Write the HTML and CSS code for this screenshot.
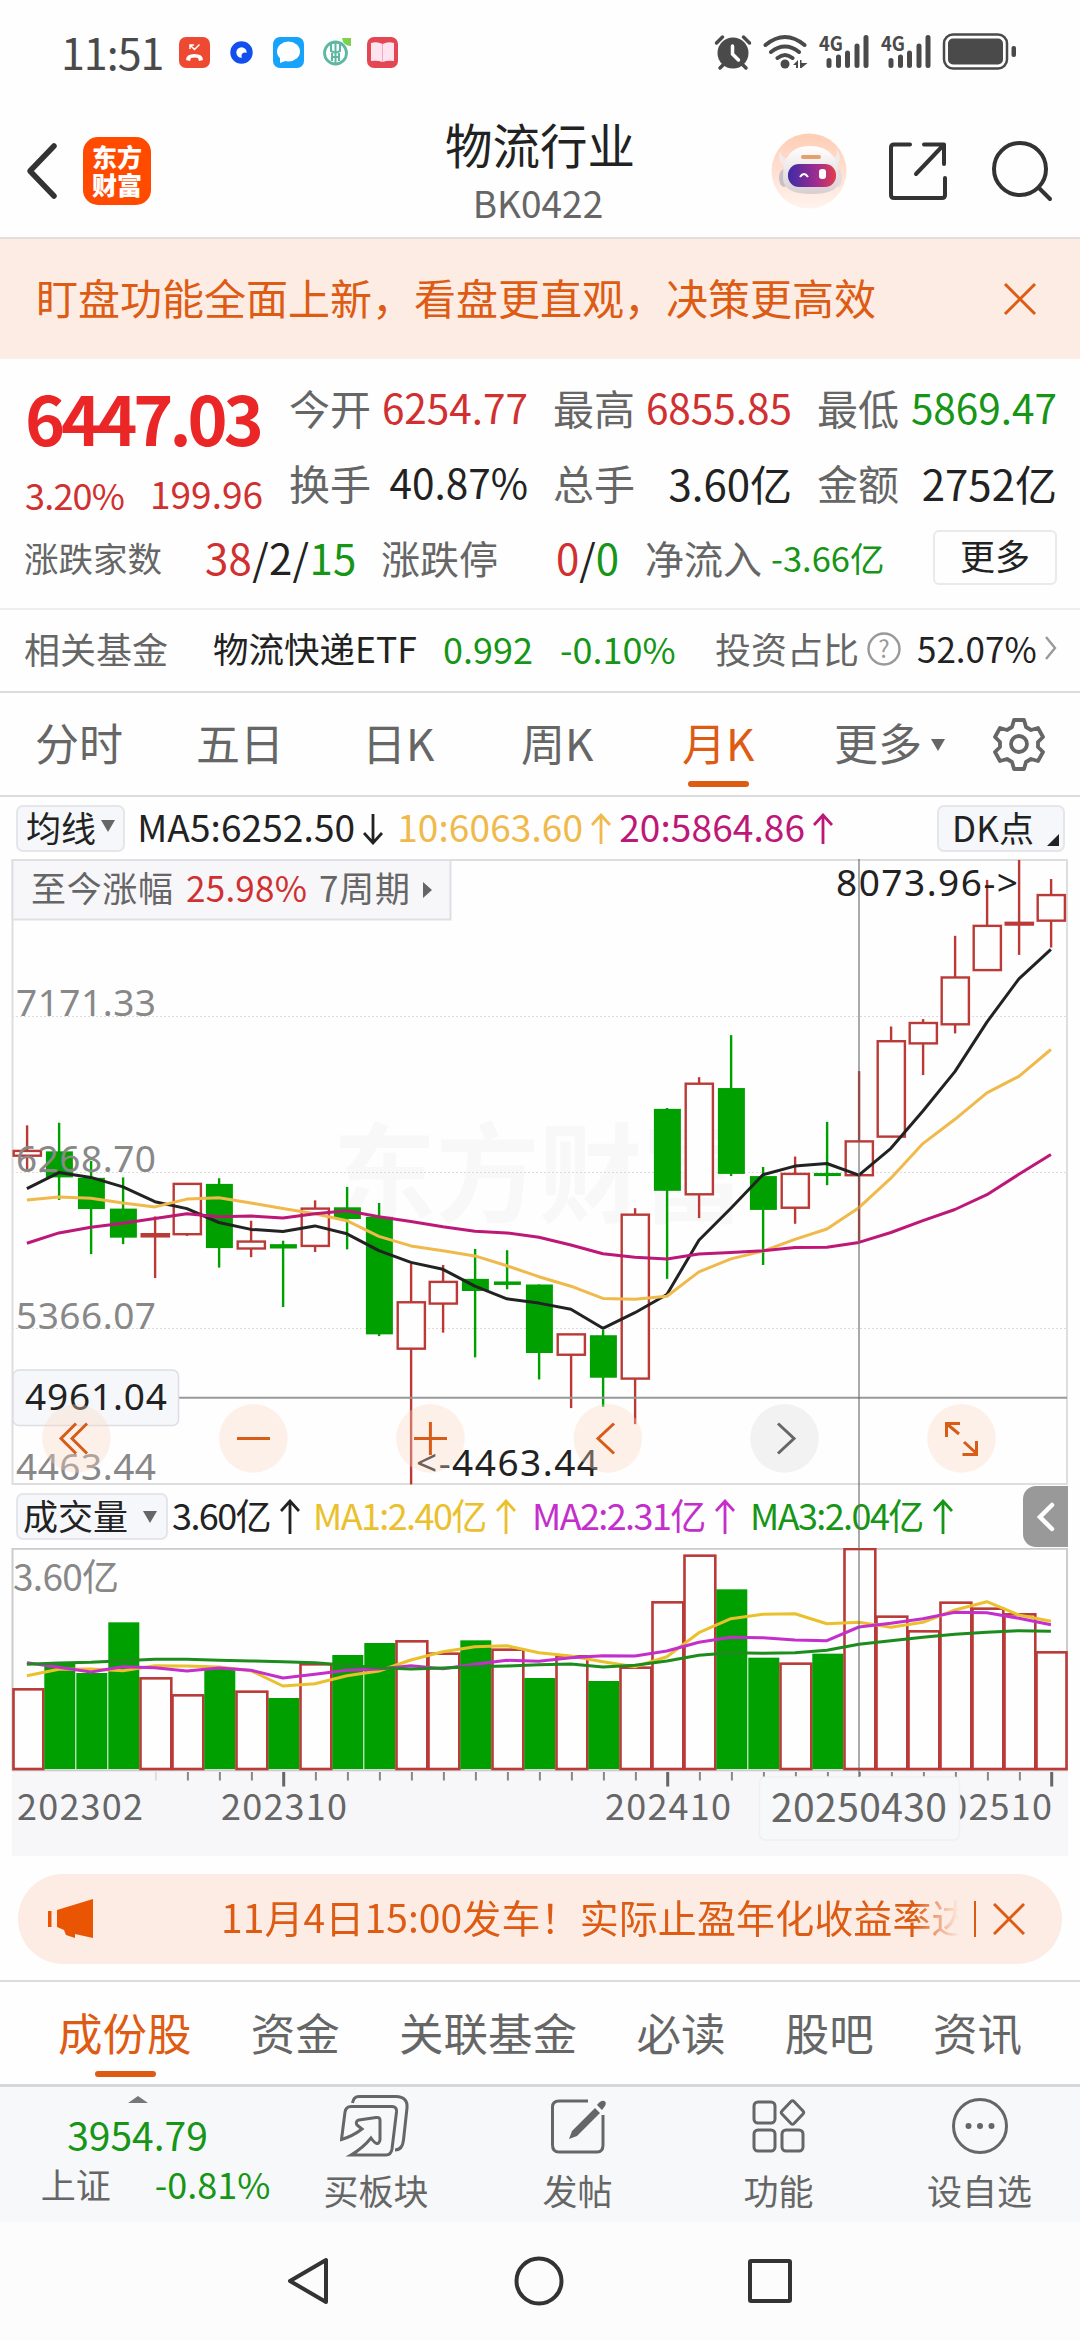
FILE: index.html
```html
<!DOCTYPE html>
<html lang="zh-CN">
<head>
    <meta charset="UTF-8">
    <meta name="viewport" content="width=device-width, initial-scale=1.0">
    <title>物流行业 BK0422</title>
    <link rel="stylesheet" href="styles.css">
</head>
<body>

    <!-- 状态栏 -->
    <div class="status">
        <span class="clock">11:51</span>
        <svg class="status-apps" width="222" height="36" viewBox="177 34 222 36">
            <rect x="179" y="37" width="31" height="31" rx="7" fill="#ee4a32"/>
            <path d="M186 60q0-6 8.500-6t8.500 6l-4 1-1-3q-3.500-1-7 0l-1 3z" fill="#fff"/>
            <path d="M190 49v-4h4M190.500 45.500l4 4 5-5" fill="none" stroke="#fff" stroke-width="1.500"/>
            <circle cx="241.500" cy="52.500" r="8.200" fill="#fff" stroke="#1250ee" stroke-width="6"/>
            <circle cx="245" cy="56" r="3.500" fill="#1250ee"/>
            <rect x="273" y="37" width="31" height="31" rx="7" fill="#17a2fb"/>
            <ellipse cx="288.500" cy="51.500" rx="11.500" ry="10" fill="#fff"/>
            <path d="M280 56v7l8-3z" fill="#fff"/>
            <circle cx="335.500" cy="53" r="11" fill="none" stroke="#5cb8a3" stroke-width="2.800"/>
            <path d="M335.500 41v23M331 43v8l4.500 2 4.500-2v-8M331 57h9M332 53v8M339 53v8" fill="none" stroke="#5cb8a3" stroke-width="2"/>
            <path d="M342 38h9v8q-8 0-9-8z" fill="#7ed14c"/>
            <rect x="367" y="37" width="31" height="31" rx="7" fill="#e24753"/>
            <path d="M371 43q6-2 11.500 1 5.500-3 11.500-1v18q-6-1-11.500 1-5.500-2-11.500-1z" fill="#ffe3ee"/>
            <path d="M382.500 44v18" stroke="#f3a9bd" stroke-width="1"/>
        </svg>
        <svg class="status-sys" width="304" height="40" viewBox="713 32 304 40" fill="#4a4a4a">
            <circle cx="732" cy="53" r="15.500"/>
            <path d="M715.500 43l6-6M748.500 43l-6-6M723 64l-4 4M741 64l4 4" stroke="#4a4a4a" stroke-width="3.500" stroke-linecap="round"/>
            <path d="M731.500 46v8l6 6" fill="none" stroke="#fff" stroke-width="3.500" stroke-linecap="round"/>
            <g fill="none" stroke="#4a4a4a" stroke-width="4" stroke-linecap="round">
                <path d="M764.500 45q19.500-16 39 0M770 52q14-11 28 0M776.500 58q7.500-6 15 0"/>
            </g>
            <circle cx="784" cy="64" r="4.500"/>
            <path d="M792 65l5-5v8h-2v-3zM799 60h1.500v3h6l-6 5h-1.500z"/>
            <text x="818" y="51" class="net" textLength="24" lengthAdjust="spacingAndGlyphs">4G</text>
            <g stroke="#4a4a4a" stroke-width="5" stroke-linecap="round">
                <path d="M828 60.500v5M837.500 57v8.500M846.500 53v12.500M856 46v19.500M865 37.500v28"/>
                <path d="M890 60.500v5M899.500 57v8.500M908.500 53v12.500M918 46v19.500M927 37.500v28"/>
            </g>
            <text x="880" y="51" class="net" textLength="24" lengthAdjust="spacingAndGlyphs">4G</text>
            <rect x="943" y="34.500" width="63" height="34" rx="9" fill="none" stroke="#4a4a4a" stroke-width="2.500"/>
            <rect x="947" y="38.500" width="55" height="26" rx="5"/>
            <rect x="1010.500" y="46" width="4.500" height="11" rx="2"/>
        </svg>
    </div>

    <!-- 标题栏 -->
    <div class="header">
        <svg width="34" height="60" viewBox="0 0 34 60"><path d="M30 5L6 30l24 25" fill="none" stroke="#333" stroke-width="5.500" stroke-linecap="round" stroke-linejoin="round"/></svg>
        <div class="logo">东方<br>财富</div>
        <div class="title">
            <h1>物流行业</h1>
            <p>BK0422</p>
        </div>
        <svg class="robot" width="76" height="76" viewBox="0 0 76 76">
            <defs>
                <linearGradient id="halo" x1="0" y1="0" x2="0" y2="1"><stop offset="0" stop-color="#ffcdb4"/><stop offset="1" stop-color="#fff3ee"/></linearGradient>
                <linearGradient id="visor" x1="0" y1="0" x2="1" y2="0"><stop offset="0" stop-color="#3d2ba6"/><stop offset="0.600" stop-color="#a02c8e"/><stop offset="1" stop-color="#e23e4e"/></linearGradient>
                <linearGradient id="helmet" x1="0" y1="0" x2="0" y2="1"><stop offset="0" stop-color="#fff"/><stop offset="1" stop-color="#d8ced2"/></linearGradient>
            </defs>
            <circle cx="38" cy="38" r="37.500" fill="url(#halo)"/>
            <path d="M9 18q2 8 9 8l6 5-6 6q-13-7-9-19zM66 16q1 8-6 10l-4 6 6 5q11-9 4-21z" fill="#f1e9ea"/>
            <ellipse cx="13" cy="45" rx="5" ry="9" fill="#c9c0c6"/>
            <ellipse cx="67" cy="45" rx="4" ry="9" fill="#e5dcde"/>
            <path d="M12 46q-1-33 27-33 29 0 29 34 0 14-28 14-27 0-28-15z" fill="url(#helmet)"/>
            <rect x="30" y="22" width="20" height="4" rx="2" fill="#e5a06d"/>
            <rect x="17" y="31" width="48" height="23" rx="11" fill="url(#visor)"/>
            <path d="M29 44q4-6 8 0" fill="none" stroke="#fff" stroke-width="2"/>
            <rect x="48" y="36" width="7" height="10" rx="3" fill="#fff"/>
        </svg>
        <svg class="share" width="60" height="60" viewBox="0 0 60 60" fill="none" stroke="#333" stroke-width="4" stroke-linecap="round" stroke-linejoin="round">
            <path d="M22 3.500H6q-3 0-3 3V54q0 3 3 3h48q3 0 3-3V37M36 3.500h20V23M56 3.500L28 33"/>
        </svg>
        <svg class="search" width="62" height="62" viewBox="0 0 62 62" fill="none" stroke="#333" stroke-width="4" stroke-linecap="round">
            <circle cx="29" cy="29" r="26"/>
            <path d="M48 48l11 11"/>
        </svg>
    </div>

    <!-- 功能提示 -->
    <div class="notice">
        <span>盯盘功能全面上新，看盘更直观，决策更高效</span>
        <svg width="34" height="34" viewBox="0 0 34 34"><path d="M2 2l30 30M32 2L2 32" stroke="#de5b14" stroke-width="3"/></svg>
    </div>

    <!-- 行情 -->
    <div class="quote">
        <div class="quote-main">
            <div class="price">
                <div class="now">6447.03</div>
                <div class="change"><span>3.20%</span><span class="diff">199.96</span></div>
            </div>
            <dl class="figures">
                <div><dt>今开</dt><dd class="up">6254.77</dd></div>
                <div><dt>最高</dt><dd class="up">6855.85</dd></div>
                <div><dt>最低</dt><dd class="down">5869.47</dd></div>
                <div><dt>换手</dt><dd>40.87%</dd></div>
                <div><dt>总手</dt><dd class="wide">3.60亿</dd></div>
                <div><dt>金额</dt><dd class="wide">2752亿</dd></div>
            </dl>
        </div>
        <div class="breadth">
            <span class="b-label">涨跌家数</span>
            <span class="b-count"><span class="up">38</span>/2/<span class="down">15</span></span>
            <span class="b-limit">涨跌停</span>
            <span class="b-zero"><span class="up">0</span>/<span class="down">0</span></span>
            <span class="b-flow">净流入</span>
            <span class="b-net down">-3.66亿</span>
            <span class="b-more">更多</span>
        </div>
    </div>

    <!-- 相关基金 -->
    <div class="fund">
        <span class="f-label">相关基金</span>
        <span class="f-name">物流快递ETF</span>
        <span class="f-price down">0.992</span>
        <span class="f-rate down">-0.10%</span>
        <span class="f-ratio">投资占比</span>
        <svg class="f-help" width="36" height="36" viewBox="0 0 36 36"><circle cx="18" cy="18" r="15.500" fill="none" stroke="#999" stroke-width="2.400"/><text x="18" y="27" class="help-mark">?</text></svg>
        <span class="f-value">52.07%</span>
        <svg width="12" height="26" viewBox="0 0 12 26"><path d="M1 2l9 11-9 11" fill="none" stroke="#999" stroke-width="2.400"/></svg>
    </div>

    <!-- 周期 -->
    <div class="periods">
        <span>分时</span>
        <span>五日</span>
        <span>日K</span>
        <span>周K</span>
        <span class="active">月K</span>
        <span class="p-more">更多<i class="caret"></i></span>
        <svg width="54" height="54" viewBox="0 0 54 54" fill="none" stroke="#666" stroke-width="3.800" stroke-linejoin="round">
            <path d="M22 3h10l2 7 5 3 7-2 5 9-5 5v5l5 5-5 9-7-2-5 3-2 7H22l-2-7-5-3-7 2-5-9 5-5v-5l-5-5 5-9 7 2 5-3z"/>
            <circle cx="27" cy="27" r="8"/>
        </svg>
    </div>

    <!-- 均线 -->
    <div class="ma">
        <span class="select">均线<i class="caret"></i></span>
        <span class="ma-item ma5">MA5:6252.50<svg width="20" height="32" viewBox="0 0 20 32"><path d="M10 1v29M1 20l9 10 9-10"/></svg></span>
        <span class="ma-item ma10">10:6063.60<svg width="20" height="32" viewBox="0 0 20 32"><path d="M10 31V2M1 12l9-10 9 10"/></svg></span>
        <span class="ma-item ma20">20:5864.86<svg width="20" height="32" viewBox="0 0 20 32"><path d="M10 31V2M1 12l9-10 9 10"/></svg></span>
        <span class="dk">DK点<i class="corner"></i></span>
    </div>

    <div class="charts">
        <!-- K线 -->
        <svg class="kline" width="1080" height="626" viewBox="0 859 1080 626">
            <text x="333" y="1214" class="watermark" textLength="412" lengthAdjust="spacingAndGlyphs">东方财富</text>
            <g class="grid">
                <path d="M12 1016.500h1056M12 1172.500h1056M12 1328.500h1056"/>
            </g>
            <rect x="12.500" y="860" width="1054.500" height="624" class="frame"/>
            <g id="candles"></g>
            <g class="axis">
                <text x="16" y="1015.500" textLength="140">7171.33</text>
                <text x="16" y="1172" textLength="140">6268.70</text>
                <text x="16" y="1328.500" textLength="140">5366.07</text>
                <text x="16" y="1480" textLength="140">4463.44</text>
            </g>
            <rect x="12.500" y="860" width="438" height="59.500" class="range-box"/>
            <g class="range">
                <text x="31" y="902" textLength="142">至今涨幅</text>
                <text x="186" y="902" textLength="121" class="range-up">25.98%</text>
                <text x="319" y="902" textLength="91">7周期</text>
                <path d="M423 882v16l9-8z"/>
            </g>
            <path d="M178 1397.700h889" class="cross"/>
            <rect x="13" y="1370" width="165.500" height="55.500" rx="6" class="tag"/>
            <text x="25" y="1410" textLength="142" class="mark">4961.04</text>
            <text x="416" y="1475.500" textLength="182" class="mark">&lt;-4463.44</text>
            <text x="836" y="895.500" textLength="182" class="mark">8073.96-&gt;</text>
            <g class="tools">
                <circle cx="76.400" cy="1438.400" r="34.300"/>
                <circle cx="253.400" cy="1438.400" r="34.300"/>
                <circle cx="430.400" cy="1438.400" r="34.300"/>
                <circle cx="607.800" cy="1438.400" r="34.300"/>
                <circle cx="784.500" cy="1438.400" r="34.300" class="off"/>
                <circle cx="961.500" cy="1438.400" r="34.300"/>
                <path d="M76 1423.500l-15 15 15 15M87 1423.500l-15 15 15 15"/>
                <path d="M237 1438.400h33M414 1438.400h33M430.400 1422v33"/>
                <path d="M614 1423.500l-16 15 16 15"/>
                <path d="M778 1423.500l16 15-16 15" class="off"/>
                <path d="M960 1423.500h-13.500v13.500M947 1424l12 10M964 1442l12 11M962.500 1454.500h14v-13.500"/>
            </g>
        </svg>

        <!-- 成交量 -->
        <div class="vol-head">
            <span class="select">成交量<i class="caret"></i></span>
            <span class="ma-item v0">3.60亿<svg width="20" height="36" viewBox="0 0 20 36"><path d="M10 35V2M1 12l9-10 9 10"/></svg></span>
            <span class="ma-item v1">MA1:2.40亿<svg width="20" height="36" viewBox="0 0 20 36"><path d="M10 35V2M1 12l9-10 9 10"/></svg></span>
            <span class="ma-item v2">MA2:2.31亿<svg width="20" height="36" viewBox="0 0 20 36"><path d="M10 35V2M1 12l9-10 9 10"/></svg></span>
            <span class="ma-item v3">MA3:2.04亿<svg width="20" height="36" viewBox="0 0 20 36"><path d="M10 35V2M1 12l9-10 9 10"/></svg></span>
            <span class="drawer"><svg width="18" height="30" viewBox="0 0 18 30"><path d="M15 3L3 15l12 12" fill="none" stroke="#fff" stroke-width="4.500" stroke-linecap="round"/></svg></span>
        </div>
        <svg class="volume" width="1080" height="308" viewBox="0 1548 1080 308">
            <rect x="12" y="1771" width="1056" height="85" fill="#f7f7fa"/>
            <rect x="12.500" y="1548.800" width="1054.500" height="221.500" class="vol-frame"/>
            <text x="13" y="1591" textLength="106" class="vol-max">3.60亿</text>
            <g id="bars"></g>
            <g id="ticks"></g>
            <g class="dates">
                <text x="17" y="1820" textLength="126">202302</text>
                <text x="221" y="1820" textLength="126">202310</text>
                <text x="605" y="1820" textLength="126">202410</text>
                <text x="926" y="1820" textLength="126">202510</text>
                <rect x="759.500" y="1777" width="200" height="63" rx="6" class="date-box"/>
                <text x="771" y="1821.500" textLength="176" class="picked">20250430</text>
            </g>
        </svg>
        <div class="cross-v"></div>
    </div>

    <!-- 活动 -->
    <div class="promo-wrap">
        <div class="promo">
            <svg width="46" height="40" viewBox="0 0 46 40" fill="#ea5504"><path d="M0 12h3.500v16H0zM9 11L45 0v39l-18-4v4l-9-3-2-5-7-3z"/></svg>
            <span class="promo-text">11月4日15:00发车！实际止盈年化收益率达</span>
            <i class="promo-line"></i>
            <svg width="32" height="32" viewBox="0 0 32 32"><path d="M1 1l30 30M31 1L1 31" stroke="#de5b14" stroke-width="3"/></svg>
        </div>
    </div>

    <!-- 栏目 -->
    <div class="sections">
        <span class="active">成份股</span>
        <span>资金</span>
        <span>关联基金</span>
        <span>必读</span>
        <span>股吧</span>
        <span>资讯</span>
    </div>

    <!-- 底部工具栏 -->
    <div class="toolbar">
        <div class="index">
            <i class="rise"></i>
            <strong>3954.79</strong>
            <p><span>上证</span><em>-0.81%</em></p>
        </div>
        <div class="tool">
            <svg width="72" height="64" viewBox="0 0 72 64">
                <path d="M12.500 9Q13.500 2.500 19 2.500H56Q68 3 67 14L63.500 46Q62.500 56 55 56"/>
                <path d="M1.500 45.500L5 18Q6 12.500 11 12.500H52Q57 12.500 56.500 18L52 55Q51 61 46 61H11Q23 54 31 44Q38 54 40 46V26Q40 23 36 23.500L19 26Q15 27 17 31L22 35Q13 42 1.500 45.500Z"/>
            </svg>
            <span>买板块</span>
        </div>
        <div class="tool">
            <svg width="56" height="56" viewBox="0 0 56 56">
                <path d="M38 3H9Q2.500 3 2.500 9V47Q2.500 54 9 54H47Q53 54 53 47V17"/>
                <path d="M45 10l5 5-23 23-8 3 3-8zM47 7q4-5 7-4t1 5l-3 4z" class="solid"/>
            </svg>
            <span>发帖</span>
        </div>
        <div class="tool">
            <svg width="56" height="56" viewBox="0 0 56 56">
                <rect x="3" y="4" width="21" height="21" rx="4"/>
                <rect x="3" y="32" width="21" height="21" rx="4"/>
                <rect x="31" y="32" width="21" height="21" rx="4"/>
                <path d="M40 3.500q1.500-1.500 3 0l9 9.500q1.500 1.500 0 3l-9 9.500q-1.500 1.500-3 0l-9-9.500q-1.500-1.500 0-3z"/>
            </svg>
            <span>功能</span>
        </div>
        <div class="tool">
            <svg width="58" height="58" viewBox="0 0 58 58">
                <circle cx="29" cy="29" r="26.500"/>
                <path d="M17.500 29h.01M29 29h.01M40.500 29h.01" class="dots"/>
            </svg>
            <span>设自选</span>
        </div>
    </div>

    <!-- 系统导航 -->
    <div class="nav">
        <svg width="44" height="50" viewBox="0 0 44 50"><path d="M40 4v42L4 25z"/></svg>
        <svg width="50" height="50" viewBox="0 0 50 50"><circle cx="25" cy="25" r="22.500"/></svg>
        <svg width="46" height="46" viewBox="0 0 46 46"><rect x="3" y="3" width="40" height="40" rx="1"/></svg>
    </div>

    <script src="chart.js"></script>
</body>
</html>
```
FILE: styles.css
```css
* {
    box-sizing: border-box;
    margin: 0;
    padding: 0;
}

body {
    width: 1080px;
    font-family: "Noto Sans CJK SC", "Noto Sans", sans-serif;
    background: #fefefe;
    color: #222;
    line-height: 1;
    white-space: nowrap;
}

svg {
    display: block;
    flex: none;
}

i, em {
    font-style: normal;
}

.up { color: #d03030; }
.down { color: #169516; }

.caret {
    display: inline-block;
    border: 7.5px solid transparent;
    border-top: 12px solid #666;
    border-bottom: 0;
}

/* 状态栏 */
.status {
    height: 100px;
    padding: 4px 62px 0 61px;
    display: flex;
    align-items: center;
}

.clock {
    width: 116px;
    padding-bottom: 2px;
    font-size: 43px;
    letter-spacing: -1px;
    color: #4a4a4a;
}

.status-sys {
    margin-left: auto;
}

.net {
    font-size: 20px;
    font-weight: bold;
}

/* 标题栏 */
.header {
    height: 139px;
    padding: 4px 27px 0 24px;
    display: flex;
    align-items: center;
    border-bottom: 2px solid #e3dedc;
}

.logo {
    width: 68px;
    height: 68px;
    margin-left: 25px;
    padding-top: 5px;
    border-radius: 15px;
    background: #ff4a00;
    color: #fff;
    font-size: 25px;
    font-weight: 900;
    line-height: 28px;
    text-align: center;
}

.title {
    width: 240px;
    margin-left: 269px;
    text-align: center;
}

.title h1 {
    font-size: 47.5px;
    font-weight: normal;
    line-height: 58px;
}

.title p {
    padding-top: 4px;
    font-size: 37px;
    line-height: 50px;
    color: #666;
    text-indent: -4px;
}

.robot { margin-left: 111px; }
.share { margin-left: 41px; }
.search { margin-left: 43px; }

/* 功能提示 */
.notice {
    height: 120px;
    padding: 0 43px 0 36px;
    display: flex;
    align-items: center;
    justify-content: space-between;
    background: #fcece3;
    color: #de5b14;
    font-size: 42px;
}

.notice span {
    padding-bottom: 5px;
}

/* 行情 */
.quote {
    height: 251px;
    border-bottom: 2px solid #eeeeee;
}

.quote-main {
    display: flex;
    height: 160px;
    padding-left: 25px;
}

.price {
    width: 264px;
    padding-top: 21px;
}

.now {
    font-size: 68px;
    line-height: 74px;
    font-weight: bold;
    letter-spacing: -4px;
    color: #ea2626;
}

.change {
    display: flex;
    justify-content: space-between;
    align-items: center;
    width: 238px;
    margin-top: 21px;
    font-size: 36px;
    letter-spacing: -0.8px;
    color: #d03030;
}

.change .diff {
    font-size: 37px;
    letter-spacing: 0;
}

.figures {
    display: grid;
    grid-template-columns: 239px 239px 240px;
    column-gap: 25px;
    grid-auto-rows: 75px;
    padding-top: 11px;
}

.figures div {
    display: flex;
    align-items: center;
    justify-content: space-between;
    font-size: 41px;
}

.figures dt {
    color: #666;
}

.figures dd {
    font-size: 40.5px;
}

.figures .wide {
    font-size: 42px;
}

.breadth {
    display: flex;
    align-items: center;
    height: 76px;
    padding-left: 24px;
    color: #666;
    font-size: 39px;
}

.b-label { font-size: 34.5px; width: 181px; }
.b-count { font-size: 42px; width: 176px; color: #222; letter-spacing: 0.3px; }
.b-limit { width: 175px; }
.b-zero { font-size: 42px; width: 89px; color: #222; }
.b-flow { width: 126px; }
.b-net { font-size: 34.5px; width: 162px; }

.b-more {
    width: 124px;
    height: 55px;
    border: 2px solid #eaeaea;
    border-radius: 6px;
    color: #222;
    font-size: 35px;
    line-height: 46px;
    text-align: center;
}

/* 相关基金 */
.fund {
    height: 83px;
    padding: 0 22px 6px 24px;
    display: flex;
    align-items: center;
    border-bottom: 2px solid #dcdcdc;
    font-size: 36px;
    color: #666;
}

.f-label { width: 189px; }
.f-name { width: 230px; color: #222; font-size: 35.5px; }
.f-price { width: 117px; }
.f-rate { width: 155px; }
.f-ratio { width: 151px; }
.f-help { margin: 2px 15px 0 0; }
.f-value { width: 128px; color: #222; font-size: 35px; }

.help-mark {
    font-size: 24px;
    fill: #999;
    text-anchor: middle;
}

/* 周期 */
.periods {
    height: 104px;
    padding: 0 34px 0 35px;
    display: flex;
    align-items: center;
    border-bottom: 2px solid #dcdcdc;
    font-size: 44px;
    color: #666;
}

.periods span {
    position: relative;
    flex: none;
    height: 100%;
    width: 161px;
    line-height: 98px;
}

.periods span:nth-child(2) { width: 166px; }
.periods .active { width: 152px; }
.periods span:nth-child(3) { width: 159px; }
.periods .p-more { width: 158px; }
.periods .p-more .caret { margin: 0 0 10px 9px; }

.active {
    color: #de5b14;
}

/* 选中项下划线 */
.active::after {
    content: "";
    position: absolute;
    left: 6px;
    bottom: 8px;
    width: 61px;
    height: 6px;
    border-radius: 3px;
    background: #de5b14;
}

/* 均线 */
.ma, .vol-head {
    display: flex;
    align-items: center;
    padding: 0 16px;
}

.ma {
    height: 62px;
    padding-right: 15px;
    font-size: 37px;
    letter-spacing: 0.1px;
}

.select, .dk {
    display: flex;
    align-items: center;
    height: 47px;
    padding: 0 8px 4px;
    border: 2px solid #e4e6ea;
    border-radius: 7px;
    background: #f6f7fa;
    font-size: 35px;
}

.ma .select .caret { margin-left: 5px; }

.dk {
    position: relative;
    width: 128px;
    margin-left: auto;
    padding-left: 13px;
}

.corner {
    position: absolute;
    right: 4px;
    bottom: 4px;
    border: 6px solid #222;
    border-top-color: transparent;
    border-left-color: transparent;
}

.ma-item {
    display: flex;
    align-items: center;
    padding-bottom: 4px;
}

.ma-item svg {
    margin: 5px 0 0 8px;
    fill: none;
    stroke: currentColor;
    stroke-width: 2.8;
}

.ma5 { width: 260px; margin-left: 12px; }
.ma10 { width: 222px; color: #f0b94c; }
.ma20 { color: #bd1878; }

/* K线 */
.charts {
    position: relative;
}

.frame, .vol-frame {
    fill: none;
    stroke: #dedede;
    stroke-width: 2;
}

.vol-frame {
    stroke: #cccccc;
}

.grid {
    stroke: #dcdcdc;
    stroke-width: 1;
    stroke-dasharray: 2 2;
}

.watermark {
    font-size: 108px;
    font-weight: bold;
    fill: #f8f8f8;
}

.axis, .mark {
    font-family: "Noto Sans", sans-serif;
    font-size: 37px;
    fill: #888;
}

.mark {
    fill: #222;
}

.range-box {
    fill: #f7f7fa;
    stroke: #e0e0e4;
    stroke-width: 2;
}

.range {
    font-size: 35px;
    fill: #666;
}

.range-up {
    fill: #d03030;
}

.tag {
    fill: #f6f7fa;
    stroke: #dcdee2;
    stroke-width: 1.5;
}

.cross {
    stroke: #999;
    stroke-width: 2;
}

.tools circle {
    fill: rgba(252, 215, 196, 0.35);
}

.tools circle.off {
    fill: #f2f2f2;
}

.tools path {
    fill: none;
    stroke: #d65c18;
    stroke-width: 3;
}

.tools path.off {
    stroke: #666;
}

.line {
    fill: none;
    stroke-width: 3;
    stroke-linejoin: round;
}

.cross-v {
    position: absolute;
    left: 858px;
    top: 0;
    width: 2px;
    height: 918px;
    background: rgba(100, 100, 100, 0.55);
}

/* 成交量 */
.vol-head {
    height: 63px;
    padding-right: 12px;
    font-size: 36px;
    letter-spacing: -1.6px;
}

.vol-head .select {
    width: 152px;
    padding-left: 5px;
    letter-spacing: 0;
}

.vol-head .select .caret { margin: 5px 0 0 15px; }

.vol-head .ma-item { padding-bottom: 5px; }
.v0 { width: 141px; margin-left: 4px; }
.v1 { width: 219px; color: #ebc02d; }
.v2 { width: 218px; color: #c42fcb; }
.v3 { color: #169516; }

.vol-head .ma-item svg {
    margin-left: 10px;
}

.drawer {
    width: 45px;
    height: 61px;
    margin-left: auto;
    padding: 16px 0 0 14px;
    border-radius: 13px 0 0 13px;
    background: #999;
}

.vol-max {
    font-size: 37px;
    fill: #888;
}

.dates {
    font-size: 36px;
    fill: #666;
}

.picked {
    font-size: 39px;
}

.date-box {
    fill: #f7f8fa;
    stroke: #f0f0f2;
    stroke-width: 1.5;
}

/* 活动 */
.promo-wrap {
    height: 126px;
    padding: 18px 18px 0;
    border-bottom: 2px solid #dcdcde;
}

.promo {
    display: flex;
    align-items: center;
    height: 90px;
    padding: 0 37px 0 30px;
    border-radius: 45px;
    background: #fcece3;
    color: #de5b14;
    font-size: 39px;
}

.promo-text {
    width: 738px;
    margin-left: 127px;
    padding-bottom: 7px;
    line-height: 56px;
    letter-spacing: 0.1px;
    overflow: hidden;
    -webkit-mask-image: linear-gradient(to right, #000 94%, transparent);
    mask-image: linear-gradient(to right, #000 94%, transparent);
}

.promo-line {
    width: 2px;
    height: 36px;
    margin: 0 17px 0 auto;
    background: #de5b14;
}

/* 栏目 */
.sections {
    display: flex;
    justify-content: space-between;
    height: 105px;
    padding: 0 58px;
    border-bottom: 3px solid #d6d7da;
    font-size: 44.5px;
    line-height: 100px;
    color: #666;
}

.sections span {
    position: relative;
}

.sections .active {
    color: #de5b14;
}

.sections .active::after {
    left: 37px;
    bottom: 7px;
}

/* 底部工具栏 */
.toolbar {
    display: grid;
    grid-template-columns: 275px 202px 201px 201px 201px;
    height: 135px;
    background: #f6f8fa;
    color: #666;
}

.index {
    display: flex;
    flex-direction: column;
    align-items: center;
    padding-top: 9px;
}

.rise {
    border: 10px solid transparent;
    border-top: 0;
    border-bottom: 7px solid #777;
}

.index strong {
    margin-top: 9px;
    font-size: 39px;
    line-height: 44px;
    font-weight: normal;
    color: #169516;
}

.index p {
    display: flex;
    align-items: center;
    gap: 44px;
    padding-left: 36px;
    margin-top: 9px;
    font-size: 35px;
}

.index em {
    color: #169516;
    font-size: 36px;
}

.tool {
    display: flex;
    flex-direction: column;
    align-items: center;
    justify-content: space-between;
    padding: 7px 0 15px;
    font-size: 35px;
}

.tool svg {
    flex: 0 0 64px;
    fill: none;
    stroke: #666;
    stroke-width: 3;
}

.tool .solid {
    fill: #666;
    stroke: none;
}

.tool .dots {
    stroke-width: 6;
    stroke-linecap: round;
}

/* 系统导航 */
.nav {
    display: flex;
    align-items: center;
    justify-content: space-between;
    height: 118px;
    padding: 0 287px 0 286px;
    background: #fcfcfc;
}

.nav svg {
    fill: none;
    stroke: #333;
    stroke-width: 4;
    stroke-linejoin: round;
}
```
FILE: chart.js
```js
// 每根K线: [涨跌, 最高, 实体上沿, 实体下沿, 最低]
var candles = [
    ['r', 658, 717, 728, 760], ['g', 652, 718, 778, 830], ['g', 740, 779, 851, 955],
    ['g', 778, 850, 917, 932], ['r', 868, 909, 914, 1010], ['r', 791, 793, 909, 913],
    ['g', 780, 793, 941, 986], ['r', 878, 926, 942, 962], ['g', 924, 932, 942, 1077],
    ['r', 831, 850, 936, 950], ['g', 800, 847, 874, 944], ['g', 837, 869, 1140, 1144],
    ['r', 977, 1066, 1173, 1486], ['r', 980, 1019, 1069, 1136], ['g', 943, 1012, 1040, 1193],
    ['g', 946, 1018, 1026, 1036], ['g', 1025, 1025, 1183, 1244], ['r', 1140, 1140, 1187, 1310],
    ['g', 1130, 1142, 1240, 1307], ['r', 849, 864, 1242, 1347], ['g', 618, 620, 809, 1012],
    ['r', 547, 562, 817, 872], ['g', 450, 572, 770, 775], ['g', 754, 775, 853, 980],
    ['r', 730, 770, 848, 885], ['g', 650, 768, 775, 796], ['r', 533, 695, 773, 925],
    ['r', 430, 464, 684, 684], ['r', 413, 422, 469, 542], ['r', 221, 317, 425, 446],
    ['r', 92, 198, 300, 300], ['r', 46, 191, 195, 265], ['r', 90, 127, 186, 248]
];

var ma5 = [804, 767, 778, 800, 834, 850, 882, 898, 903, 890, 908, 947, 974, 990, 1029, 1058, 1068, 1082, 1126, 1090, 1048, 923, 849, 772, 752, 746, 773, 711, 625, 534, 420, 320, 252];
var ma10 = [830, 823, 826, 837, 846, 828, 825, 837, 850, 862, 878, 914, 936, 947, 959, 982, 1007, 1029, 1057, 1059, 1052, 996, 966, 948, 921, 897, 848, 780, 700, 644, 583, 545, 483];
var ma20 = [930, 906, 893, 884, 873, 862, 869, 867, 872, 862, 855, 869, 880, 892, 902, 906, 916, 934, 954, 962, 966, 955, 951, 947, 940, 939, 928, 905, 878, 852, 818, 771, 725];

// 成交量柱顶
var volumes = [628, 552, 579, 427, 595, 646, 567, 635, 654, 553, 525, 489, 484, 521, 481, 509, 594, 529, 603, 563, 367, 227, 328, 533, 551, 521, 207, 410, 454, 368, 386, 403, 517];
var volColors = 'rgggrrgrgrggrrgrgrgrrrggrgrrrrrrr';
var vma1 = [587, 568, 567, 572, 557, 558, 561, 572, 618, 611, 587, 573, 540, 515, 500, 497, 518, 528, 545, 560, 530, 458, 416, 403, 401, 431, 427, 442, 427, 390, 365, 405, 424];
var vma2 = [548, 562, 576, 560, 563, 573, 564, 571, 594, 583, 571, 567, 557, 566, 553, 541, 544, 533, 527, 528, 513, 487, 472, 473, 480, 482, 441, 430, 416, 397, 398, 415, 434];
var vma3 = [553, 549, 547, 542, 538, 538, 541, 543, 545, 548, 556, 563, 567, 564, 560, 558, 554, 552, 561, 556, 543, 526, 518, 520, 518, 511, 493, 482, 472, 463, 457, 452, 454];

var RED = '#b93a37';
var GREEN = '#00a000';

function x(i) { return 26.9 + i * 32; }
function ky(v) { return 840 + v / 2.306; }
function vy(v) { return 1480 + v / 3; }

function rect(left, top, width, height, color, border) {
    if (border) {
        return '<rect x="' + (left + 1) + '" y="' + (top + 1) + '" width="' + (width - 2) + '" height="' + Math.max(height - 2, 0.5) + '" fill="#fefefe" stroke="' + color + '" stroke-width="' + border + '"/>';
    }
    return '<rect x="' + left + '" y="' + top + '" width="' + width + '" height="' + height + '" fill="' + color + '"/>';
}

function line(data, y, color) {
    var points = data.map(function (v, i) { return x(i) + ',' + y(v).toFixed(1); }).join(' ');
    return '<polyline class="line" points="' + points + '" stroke="' + color + '"/>';
}

var html = '';
candles.forEach(function (c, i) {
    var red = c[0] === 'r';
    var color = red ? RED : GREEN;
    html += rect(x(i) - 1, ky(c[1]), 2.4, ky(c[4]) - ky(c[1]), color);
    if (red) {
        html += rect(x(i) - 14.2, ky(c[2]) - 1, 29.2, ky(c[3]) - ky(c[2]) + 2, color, 2.4);
    } else {
        html += rect(x(i) - 13, ky(c[2]), 27, ky(c[3]) - ky(c[2]), color);
    }
});
html += line(ma5, ky, '#222') + line(ma10, ky, '#f0b94c') + line(ma20, ky, '#bd1878');
document.getElementById('candles').innerHTML = html;

html = '';
volumes.forEach(function (v, i) {
    var top = vy(v);
    if (volColors[i] === 'r') {
        var left = Math.max(x(i) - 15.4, 12.5);
        html += rect(left, top - 1, Math.min(x(i) + 17.4, 1067.5) - left, 1771 - top, RED, 2.6);
    } else {
        html += rect(x(i) - 14.6, top, 31, 1769 - top, GREEN);
    }
});
html += line(vma1, vy, '#ebc02d') + line(vma2, vy, '#c42fcb') + line(vma3, vy, '#1c8c1c');
document.getElementById('bars').innerHTML = html;

// 时间刻度, 每年10月加粗
html = '';
for (var i = 4; i < 33; i++) {
    var major = (i - 8) % 12 === 0;
    html += rect(x(i) + (major ? -0.7 : 0), 1772, major ? 3 : 2, major ? 14.5 : 8.5, major ? '#666' : (i === 4 ? '#ddd' : '#888'));
}
document.getElementById('ticks').innerHTML = html;
```
